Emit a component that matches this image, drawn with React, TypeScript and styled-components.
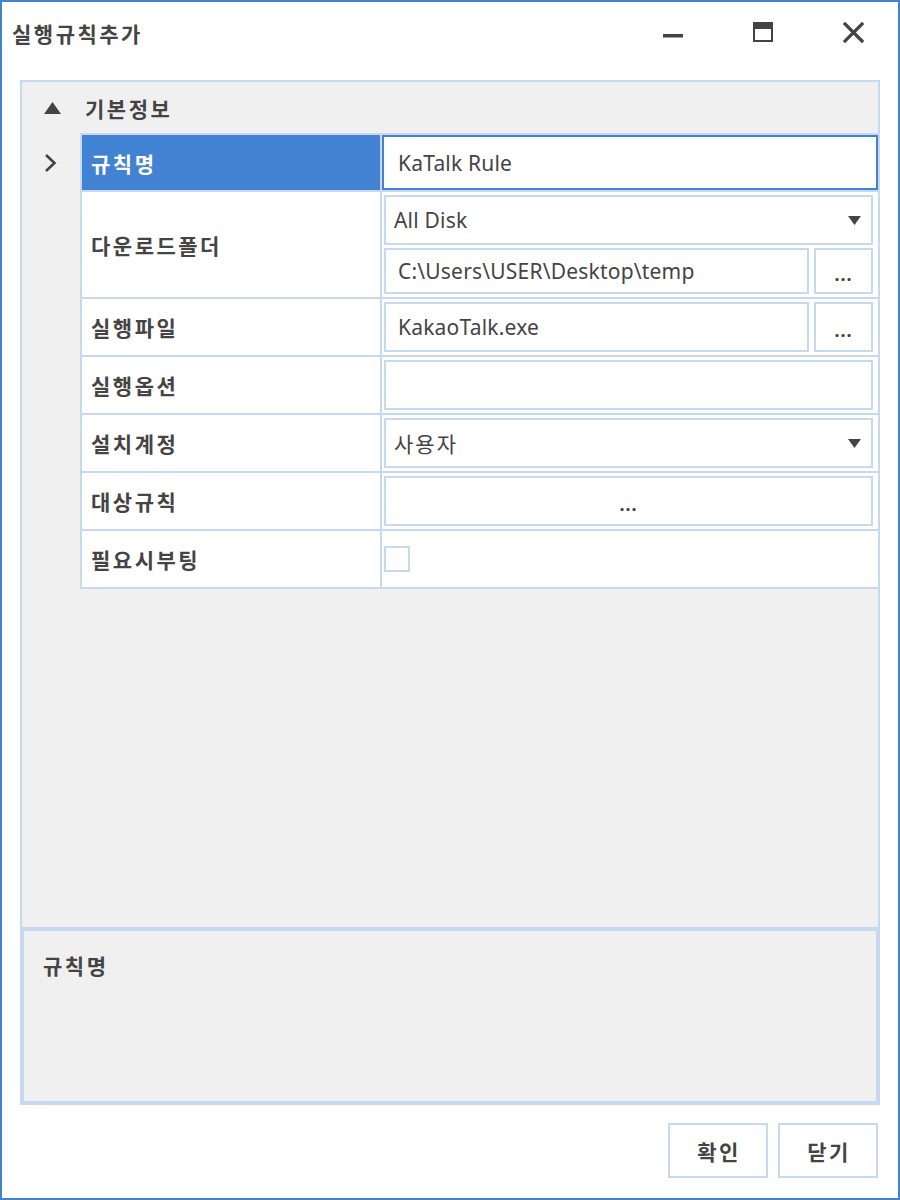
import React from "react";
import styled, { createGlobalStyle } from "styled-components";

const GlobalStyle = createGlobalStyle`
  html, body { margin: 0; padding: 0; background: #ffffff; }
  * { box-sizing: border-box; }
`;

const BLUE = "#4282d2";
const LINE = "#c6d9f0";
const TEXT = "#444444";
const KO = `"Noto Sans CJK KR", "Noto Sans", sans-serif`;
const LATIN = `"Noto Sans", "Noto Sans CJK KR", sans-serif`;

const Window = styled.div`
  width: 900px;
  height: 1200px;
  border: 2px solid ${BLUE};
  background: #ffffff;
  display: flex;
  flex-direction: column;
  font-family: ${KO};
  color: ${TEXT};
`;

const TitleBar = styled.div`
  height: 78px;
  display: flex;
  justify-content: space-between;
  align-items: flex-start;
`;

const Title = styled.div`
  padding: 16px 0 0 10px;
  font-size: 21px;
  line-height: 30px;
  font-weight: 700;
  letter-spacing: 2.5px;
`;

const Controls = styled.div`
  display: flex;
`;

const CtrlButton = styled.button`
  width: 90px;
  height: 60px;
  border: none;
  background: transparent;
  padding: 0;
  display: flex;
  align-items: center;
  justify-content: center;
  color: ${TEXT};
`;

const Body = styled.div`
  padding: 0 18px;
`;

const Panel = styled.div`
  height: 1025px;
  border: 2px solid ${LINE};
  background: #f0f0f0;
  display: flex;
  flex-direction: column;
`;

const PropertyArea = styled.div`
  flex: 1;
  display: flex;
  flex-direction: column;
`;

const SectionHeader = styled.div`
  height: 51px;
  display: flex;
  align-items: center;
  gap: 24px;
  padding-left: 22px;
  font-size: 21px;
  font-weight: 700;
  letter-spacing: 2.5px;
`;

const Row = styled.div`
  display: flex;
`;

const Gutter = styled.div`
  width: 58px;
  flex: none;
  display: flex;
  align-items: center;
  padding-left: 22px;
`;

const Cells = styled.div<{ $h: number; $first?: boolean }>`
  flex: 1;
  height: ${(p) => p.$h}px;
  display: flex;
  border-left: 2px solid ${LINE};
  border-bottom: 2px solid ${LINE};
  border-top: ${(p) => (p.$first ? `2px solid ${LINE}` : "none")};
`;

const Label = styled.div<{ $active?: boolean }>`
  width: 300px;
  flex: none;
  border-right: 2px solid ${LINE};
  padding-left: 9px;
  display: flex;
  align-items: center;
  font-size: 21px;
  font-weight: 700;
  letter-spacing: 2.5px;
  background: ${(p) => (p.$active ? BLUE : "#ffffff")};
  color: ${(p) => (p.$active ? "#ffffff" : TEXT)};
`;

const Value = styled.div<{ $flush?: boolean; $center?: boolean }>`
  flex: 1;
  background: #ffffff;
  padding: ${(p) => (p.$flush ? "0" : "3px 5px 3px 2px")};
  display: flex;
  flex-direction: column;
  justify-content: ${(p) => (p.$center ? "center" : "stretch")};
  gap: 3px;
`;

const TextBox = styled.div<{ $focused?: boolean }>`
  flex: 1;
  min-width: 0;
  border: 2px solid ${(p) => (p.$focused ? BLUE : LINE)};
  background: #ffffff;
  display: flex;
  align-items: center;
  padding-left: ${(p) => (p.$focused ? 14 : 12)}px;
  font-family: ${LATIN};
  font-size: 21px;
  letter-spacing: 0.2px;
  color: ${TEXT};
`;

const Select = styled.div`
  flex: 1;
  border: 2px solid ${LINE};
  background: #ffffff;
  display: flex;
  align-items: center;
  justify-content: space-between;
  padding: 0 10px 0 8px;
  font-family: ${LATIN};
  font-size: 21px;
  letter-spacing: 0.2px;
  color: ${TEXT};
`;

const KoText = styled.span`
  font-family: ${KO};
  letter-spacing: 2px;
`;

const BrowseRow = styled.div`
  flex: 1;
  display: flex;
  gap: 5px;
`;

const Browse = styled.div<{ $wide?: boolean }>`
  width: ${(p) => (p.$wide ? "auto" : "59px")};
  flex: ${(p) => (p.$wide ? "1" : "none")};
  border: 2px solid ${LINE};
  background: #ffffff;
  display: flex;
  align-items: center;
  justify-content: center;
  padding-top: 6px;
  font-family: ${LATIN};
  font-size: 18px;
  font-weight: 700;
  letter-spacing: 1px;
  color: ${TEXT};
`;

const CheckBox = styled.div`
  width: 26px;
  height: 26px;
  border: 2px solid ${LINE};
  background: #ffffff;
`;

const Description = styled.div`
  height: 176px;
  border: 2px solid ${LINE};
  border-top-width: 4px;
  padding: 19px 0 0 19px;
  font-size: 21px;
  line-height: 30px;
  font-weight: 700;
  letter-spacing: 2.5px;
`;

const Footer = styled.div`
  display: flex;
  justify-content: flex-end;
  gap: 10px;
  padding: 18px 20px 0 0;
`;

const FooterButton = styled.button`
  width: 100px;
  height: 55px;
  border: 2px solid ${LINE};
  background: #ffffff;
  font-family: ${KO};
  font-size: 21px;
  font-weight: 700;
  letter-spacing: 2.5px;
  color: ${TEXT};
  padding: 0 0 0 2px;
`;

const MinIcon = () => (
  <svg width="20" height="20" viewBox="0 0 20 20">
    <rect x="0" y="12" width="20" height="3.5" fill={TEXT} />
  </svg>
);

const MaxIcon = () => (
  <svg width="20" height="20" viewBox="0 0 20 20">
    <rect x="1" y="1" width="18" height="18" fill="none" stroke={TEXT} strokeWidth="2" />
    <rect x="0" y="0" width="20" height="7" fill={TEXT} />
  </svg>
);

const CloseIcon = () => (
  <svg width="21" height="21" viewBox="0 0 21 21">
    <path d="M2 2 L19 19 M19 2 L2 19" stroke={TEXT} strokeWidth="3.2" strokeLinecap="square" />
  </svg>
);

const UpTriangle = () => (
  <svg width="17" height="12" viewBox="0 0 17 12">
    <polygon points="8.5,0 17,12 0,12" fill={TEXT} />
  </svg>
);

const Chevron = () => (
  <svg width="13" height="20" viewBox="0 0 13 20">
    <polyline points="2,2 10.5,10 2,18" fill="none" stroke={TEXT} strokeWidth="2.6" />
  </svg>
);

const DownArrow = () => (
  <svg width="13" height="9" viewBox="0 0 13 9">
    <polygon points="0,0 13,0 6.5,9" fill={TEXT} />
  </svg>
);

export default function App() {
  return (
    <>
      <GlobalStyle />
      <Window>
        <TitleBar>
          <Title>실행규칙추가</Title>
          <Controls>
            <CtrlButton aria-label="minimize"><MinIcon /></CtrlButton>
            <CtrlButton aria-label="maximize"><MaxIcon /></CtrlButton>
            <CtrlButton aria-label="close"><CloseIcon /></CtrlButton>
          </Controls>
        </TitleBar>
        <Body>
          <Panel>
            <PropertyArea>
              <SectionHeader>
                <UpTriangle />
                <span>기본정보</span>
              </SectionHeader>

              <Row>
                <Gutter><Chevron /></Gutter>
                <Cells $h={59} $first>
                  <Label $active>규칙명</Label>
                  <Value $flush>
                    <TextBox $focused>KaTalk Rule</TextBox>
                  </Value>
                </Cells>
              </Row>

              <Row>
                <Gutter />
                <Cells $h={107}>
                  <Label>다운로드폴더</Label>
                  <Value>
                    <Select>
                      <span>All Disk</span>
                      <DownArrow />
                    </Select>
                    <BrowseRow>
                      <TextBox>C:\Users\USER\Desktop\temp</TextBox>
                      <Browse>...</Browse>
                    </BrowseRow>
                  </Value>
                </Cells>
              </Row>

              <Row>
                <Gutter />
                <Cells $h={58}>
                  <Label>실행파일</Label>
                  <Value>
                    <BrowseRow>
                      <TextBox>KakaoTalk.exe</TextBox>
                      <Browse>...</Browse>
                    </BrowseRow>
                  </Value>
                </Cells>
              </Row>

              <Row>
                <Gutter />
                <Cells $h={58}>
                  <Label>실행옵션</Label>
                  <Value>
                    <TextBox />
                  </Value>
                </Cells>
              </Row>

              <Row>
                <Gutter />
                <Cells $h={58}>
                  <Label>설치계정</Label>
                  <Value>
                    <Select>
                      <KoText>사용자</KoText>
                      <DownArrow />
                    </Select>
                  </Value>
                </Cells>
              </Row>

              <Row>
                <Gutter />
                <Cells $h={58}>
                  <Label>대상규칙</Label>
                  <Value>
                    <BrowseRow>
                      <Browse $wide>...</Browse>
                    </BrowseRow>
                  </Value>
                </Cells>
              </Row>

              <Row>
                <Gutter />
                <Cells $h={58}>
                  <Label>필요시부팅</Label>
                  <Value $center>
                    <CheckBox />
                  </Value>
                </Cells>
              </Row>
            </PropertyArea>
            <Description>규칙명</Description>
          </Panel>
        </Body>
        <Footer>
          <FooterButton>확인</FooterButton>
          <FooterButton>닫기</FooterButton>
        </Footer>
      </Window>
    </>
  );
}
